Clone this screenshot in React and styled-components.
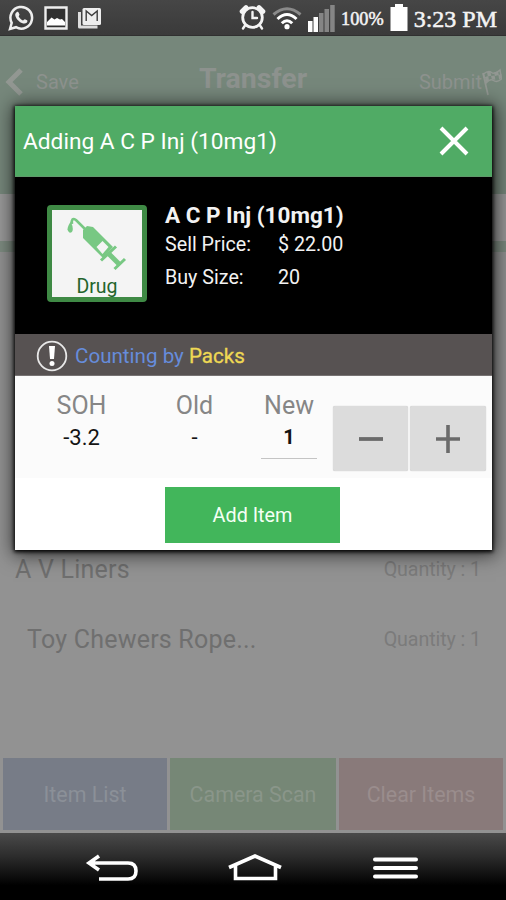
import styled, { createGlobalStyle } from "styled-components";

const GlobalStyle = createGlobalStyle`
  * {
    box-sizing: border-box;
  }

  body {
    margin: 0;
    background: #000;
    font-family: Roboto, "Liberation Sans", sans-serif;
  }

  button {
    border: 0;
    padding: 0;
    background: none;
    font-family: inherit;
  }

  svg {
    display: block;
    flex: none;
  }
`;

const Screen = styled.div`
  position: relative;
  display: flex;
  flex-direction: column;
  width: 506px;
  height: 900px;
  overflow: hidden;
  background: #929292;
`;

const StatusBar = styled.header`
  display: flex;
  justify-content: space-between;
  height: 36px;
  flex: none;
  padding: 0 9px 0 8px;
  background: linear-gradient(#464646, #3a3a3a);
  border-bottom: 1px solid #303030;
  color: #f4f4f4;
  font-family: "Liberation Serif", serif;
`;

const StatusGroup = styled.div`
  display: flex;
  align-items: center;
  gap: ${({ $gap }) => $gap}px;
`;

const StatusText = styled.span`
  font-size: ${({ $size }) => $size}px;
  line-height: 34px;
  white-space: nowrap;
  -webkit-text-stroke: 0.5px #f4f4f4;
  padding-top: 3px;
`;

const TopBar = styled.div`
  display: flex;
  align-items: flex-start;
  justify-content: space-between;
  height: 158px;
  flex: none;
  padding: 26px 4px 0 4px;
  background: #76877b;
  color: #8d928e;
`;

const TopAction = styled.div`
  display: flex;
  align-items: center;
  width: 106px;
  height: 39px;
  justify-content: ${({ $end }) => ($end ? "flex-end" : "flex-start")};
  gap: ${({ $end }) => ($end ? 0 : 13)}px;
  font-size: 20px;
`;

const Title = styled.h1`
  margin: 0;
  font-size: 28.5px;
  line-height: 34px;
  font-weight: 700;
`;

const Strip = styled.div`
  height: 58px;
  flex: none;
  background: #999;
  border-bottom: 11px solid #7d8b80;
`;

const List = styled.div`
  flex: 1;
  padding-top: 282px;
`;

const ListRow = styled.div`
  display: flex;
  align-items: center;
  justify-content: space-between;
  height: 70px;
  padding: 0 25px 0 ${({ $left }) => $left}px;
  color: #6f6f6f;
  font-size: 25px;
  letter-spacing: 0.22px;
`;

const Quantity = styled.span`
  color: #7b7b7b;
  font-size: 19.7px;
  letter-spacing: -0.1px;
`;

const Footer = styled.div`
  display: grid;
  grid-template-columns: 164px 166px 164px;
  gap: 3px;
  height: 75px;
  flex: none;
  padding: 0 3px 3px;
`;

const FooterButton = styled.button`
  background: ${({ $bg }) => $bg};
  color: ${({ $color }) => $color};
  font-size: 21.4px;
`;

const NavBar = styled.nav`
  display: flex;
  align-items: center;
  justify-content: space-between;
  height: 67px;
  flex: none;
  padding: 3px 87px 0 85px;
  background: linear-gradient(#4a4a4a, #2c2c2c 35%, #000 78%);
`;

const Dialog = styled.section`
  position: absolute;
  top: 106px;
  left: 15px;
  width: 477px;
  height: 444px;
  background: #fff;
  box-shadow: 0 1px 4px 1px #000, 1px 2px 18px 3px rgba(0, 0, 0, 0.65);
`;

const DialogHeader = styled.div`
  display: flex;
  align-items: center;
  justify-content: space-between;
  height: 71px;
  padding: 0 23px 0 8px;
  background: #50ab65;
  border-bottom: 1px solid #5f9a6b;
  color: #fff;
  font-size: 22.7px;
`;

const Product = styled.div`
  display: flex;
  height: 157px;
  padding: 28px 0 0 32px;
  gap: 18px;
  background: #000;
  color: #f2f2f2;
`;

const DrugTile = styled.div`
  display: flex;
  flex-direction: column;
  align-items: center;
  width: 100px;
  height: 97px;
  padding-top: 4px;
  border: 5px solid #3f8a45;
  border-radius: 4px;
  background: #f4f4f4;
  color: #24642c;
  font-size: 19.5px;
  line-height: 21px;
`;

const ProductName = styled.h2`
  margin: -2px 0 0;
  font-size: 22.5px;
  line-height: 25px;
  font-weight: 700;
`;

const Details = styled.dl`
  display: grid;
  grid-template-columns: 113px auto;
  margin: 0;
  font-size: 19.7px;
  line-height: 33px;

  dt,
  dd {
    margin: 0;
  }
`;

const CountingBar = styled.div`
  display: flex;
  align-items: center;
  height: 42px;
  padding: 2px 0 0 21px;
  background: #575252;
  border-bottom: 1px solid #777373;
  color: #668cdb;
  font-size: 20.6px;
  gap: 7px;

  strong {
    color: #eed854;
    font-weight: 400;
    -webkit-text-stroke: 0.3px #eed854;
  }
`;

const Counts = styled.div`
  display: flex;
  height: 102px;
  padding: 14px 6px 0 10px;
  background: #fbfbfb;
`;

const Count = styled.div`
  display: flex;
  flex-direction: column;
  align-items: center;
  width: ${({ $width }) => $width}px;
  color: #868686;
  font-size: 25px;
  line-height: 31px;
`;

const CountValue = styled.div`
  width: 56px;
  height: 38px;
  color: #141414;
  font-size: 22px;
  line-height: 33px;
  text-align: center;
  ${({ $editable }) =>
    $editable && "border-bottom: 1px solid #c4c4c4; font-weight: 700; font-size: 20px;"}
`;

const Stepper = styled.div`
  display: grid;
  grid-template-columns: 75px 76px;
  gap: 2px;
  height: 65px;
  margin: 16px 0 0 auto;
`;

const StepButton = styled.button`
  display: grid;
  place-items: center;
  border-radius: 2px;
  background: #dcdcdc;
  box-shadow: 0 0 1px #bbb;
`;

const AddButton = styled.button`
  display: block;
  width: 175px;
  height: 56px;
  margin: 9px 0 0 150px;
  background: #42b65b;
  color: #f4fff4;
  font-size: 19.8px;
`;

const WhatsAppIcon = () => (
  <svg width="26" height="26" viewBox="0 0 26 26">
    <path d="M2 24l1.7-6.2A10.8 10.8 0 1 1 8 22.2z" fill="none" stroke="#eee" strokeWidth="2.5" />
    <path
      d="M8.6 7.2c.7-.8 1.7-.6 2 .2l.9 2c.2.6-1 1.6-.8 2.1 1 2 2.3 3 4.2 3.9.6.2 1.4-1.4 2-1.2l2.2 1.1c.6.4.3 1.9-.4 2.5-1.8 1.6-4.8.7-7.4-1.4-2.6-2.1-4.7-5.6-3.9-7.7.2-.6.6-1.1 1.2-1.5z"
      fill="#eee"
    />
  </svg>
);

const GalleryIcon = () => (
  <svg width="24" height="24" viewBox="0 0 24 24">
    <path d="M1.5 1.5h21v21h-21z" fill="#303030" stroke="#eee" strokeWidth="2.4" />
    <path d="M3 19.5V16l4.5-4.5 3 2 2.5-1.5 3 1.5 2-.5 3 3v3.5z" fill="#fff" />
  </svg>
);

const MailIcon = () => (
  <svg width="24" height="22" viewBox="0 0 24 22">
    <path d="M1.5 5v15h18" fill="none" stroke="#ddd" strokeWidth="3" strokeLinejoin="round" />
    <rect x="4.5" y="1" width="18.5" height="17" rx="1.5" fill="#eee" />
    <path d="M8.2 14V4l5.5 4.5L19.2 4v10" fill="none" stroke="#3c3c3c" strokeWidth="1.4" />
  </svg>
);

const AlarmIcon = () => (
  <svg width="27" height="27" viewBox="0 0 27 27">
    <g fill="none" stroke="#f4f4f4" strokeLinecap="round">
      <circle cx="13.5" cy="13.5" r="9.8" strokeWidth="2.8" />
      <path d="M3 7.5l4-4M24 7.5l-4-4" strokeWidth="4.6" />
      <path d="M13.5 8v6h4.5M6 21.5l-2 3M21 21.5l2 3" strokeWidth="2.4" />
    </g>
  </svg>
);

const WifiIcon = () => (
  <svg width="30" height="24" viewBox="0 0 30 24">
    <g fill="none" strokeWidth="3">
      <path d="M1.5 8.5Q15-3 28.5 8.5" stroke="#8a8a8a" />
      <path d="M5.5 13Q15 4 24.5 13M9.8 17.3Q15 12 20.2 17.3" stroke="#fff" />
    </g>
    <circle cx="15" cy="20.7" r="2.6" fill="#fff" />
  </svg>
);

const SignalIcon = () => (
  <svg width="27" height="28" viewBox="0 0 27 28">
    <path d="M0 17h4.5v11H0zM5.5 13H10v15H5.5z" fill="#fff" />
    <path d="M11 9h4.5v19H11zM16.5 5H21v23h-4.5zM22.2 1h4.5v27h-4.5z" fill="#858585" />
  </svg>
);

const BatteryIcon = () => (
  <svg width="18" height="27" viewBox="0 0 18 27">
    <path d="M5 0h8v3h4.5v24H.5V3H5z" fill="#fff" />
  </svg>
);

const FlagIcon = () => (
  <svg width="20" height="28" viewBox="0 0 20 28">
    <path d="M1 5l5 22" stroke="#929792" strokeWidth="1.7" />
    <path d="M1.5 6q5-4 8-1.5T18 2l1.5 9q-5 4-8 1.5T4 15z" fill="none" stroke="#929792" strokeWidth="1.5" />
    <path
      d="M5 4l3.5 0 .8 3.8-3.5.6zM12 4.5l4-1.5 .8 4-3.8.9zM9 8l3.6-.6.8 4.4-3.5-.3zM16.4 7l3-1 .5 4-2.8 1.2zM3 9l3.2-1 .9 4.5-3 1.4z"
      fill="#929792"
    />
  </svg>
);

const SyringeIcon = () => (
  <svg width="60" height="62" viewBox="0 0 60 62">
    <g fill="none" stroke="#78c883">
      <path d="M5 10Q4 3 9 6l9 9" strokeWidth="2.6" />
      <path d="M42 40l11 11" strokeWidth="5" />
      <path d="M34 46.5L49 32.5M47.5 55L58 45" strokeWidth="3" />
    </g>
    <path d="M3.8 7.5q-6 9-1 11.3Q8.3 18 3.8 7.5z" fill="#78c883" />
    <path d="M16 16l4-4 6 1 20 20-10 11-20-20z" fill="#78c883" />
    <path d="M29.5 33l6-6 6 6-6 7z" fill="#f4f4f4" />
  </svg>
);

const AlertIcon = () => (
  <svg width="32" height="32" viewBox="0 0 32 32">
    <circle cx="16" cy="16" r="14.3" fill="none" stroke="#e8e8e8" strokeWidth="1.8" />
    <path d="M13 6h6l-1 13h-4z" fill="#fff" />
    <circle cx="16" cy="23.5" r="2.5" fill="#fff" />
  </svg>
);

const App = () => {
  return (
    <>
      <GlobalStyle />
      <Screen>
        <StatusBar>
          <StatusGroup $gap={10}>
            <WhatsAppIcon />
            <GalleryIcon />
            <MailIcon />
          </StatusGroup>
          <StatusGroup $gap={6}>
            <AlarmIcon />
            <WifiIcon />
            <SignalIcon />
            <StatusText $size={18.3}>100%</StatusText>
            <BatteryIcon />
            <StatusText $size={24}>3:23 PM</StatusText>
          </StatusGroup>
        </StatusBar>

        <TopBar>
          <TopAction>
            <svg width="19" height="28" viewBox="0 0 19 28">
              <path d="M17 2L5 14l12 12" fill="none" stroke="#929792" strokeWidth="5" />
            </svg>
            Save
          </TopAction>
          <Title>Transfer</Title>
          <TopAction $end>
            Submit
            <FlagIcon />
          </TopAction>
        </TopBar>
        <Strip />

        <List>
          <ListRow $left={15}>
            A V Liners
            <Quantity>Quantity : 1</Quantity>
          </ListRow>
          <ListRow $left={27}>
            Toy Chewers Rope...
            <Quantity>Quantity : 1</Quantity>
          </ListRow>
        </List>

        <Footer>
          <FooterButton $bg="#777c87" $color="#8b9098">
            Item List
          </FooterButton>
          <FooterButton $bg="#768776" $color="#8a968a">
            Camera Scan
          </FooterButton>
          <FooterButton $bg="#897a7a" $color="#9a8d8d">
            Clear Items
          </FooterButton>
        </Footer>

        <NavBar>
          <svg width="54" height="30" viewBox="0 0 54 30">
            <path d="M14 3L4 10l10 7M4 10h39q8 0 8 8t-8 8H14" fill="none" stroke="#fff" strokeWidth="3.6" />
          </svg>
          <svg width="56" height="30" viewBox="0 0 56 30">
            <path d="M1 14.5L27 3l26 11.5M7.5 13v12.5h40V13" fill="none" stroke="#fff" strokeWidth="3.6" />
          </svg>
          <svg width="47" height="24" viewBox="0 0 47 24">
            <path d="M3 3.5h41M3 12h41M3 20.5h41" stroke="#fff" strokeWidth="4" strokeLinecap="round" />
          </svg>
        </NavBar>

        <Dialog>
          <DialogHeader>
            Adding A C P Inj (10mg1)
            <svg width="30" height="30" viewBox="0 0 30 30">
              <path d="M2 2l26 26M28 2L2 28" stroke="#fff" strokeWidth="4" />
            </svg>
          </DialogHeader>
          <Product>
            <DrugTile>
              <SyringeIcon />
              Drug
            </DrugTile>
            <div>
              <ProductName>A C P Inj (10mg1)</ProductName>
              <Details>
                <dt>Sell Price:</dt>
                <dd>$ 22.00</dd>
                <dt>Buy Size:</dt>
                <dd>20</dd>
              </Details>
            </div>
          </Product>
          <CountingBar>
            <AlertIcon />
            <span>
              Counting by <strong>Packs</strong>
            </span>
          </CountingBar>
          <Counts>
            <Count $width={113}>
              SOH
              <CountValue>-3.2</CountValue>
            </Count>
            <Count $width={113}>
              Old
              <CountValue>-</CountValue>
            </Count>
            <Count $width={76}>
              New
              <CountValue $editable>1</CountValue>
            </Count>
            <Stepper>
              <StepButton>
                <svg width="24" height="28" viewBox="0 0 24 28">
                  <path d="M0 14h24" stroke="#6b6b6b" strokeWidth="3.8" />
                </svg>
              </StepButton>
              <StepButton>
                <svg width="24" height="28" viewBox="0 0 24 28">
                  <path d="M0 14h24M12 0v28" stroke="#6b6b6b" strokeWidth="3.6" />
                </svg>
              </StepButton>
            </Stepper>
          </Counts>
          <AddButton>Add Item</AddButton>
        </Dialog>
      </Screen>
    </>
  );
};

export default App;
